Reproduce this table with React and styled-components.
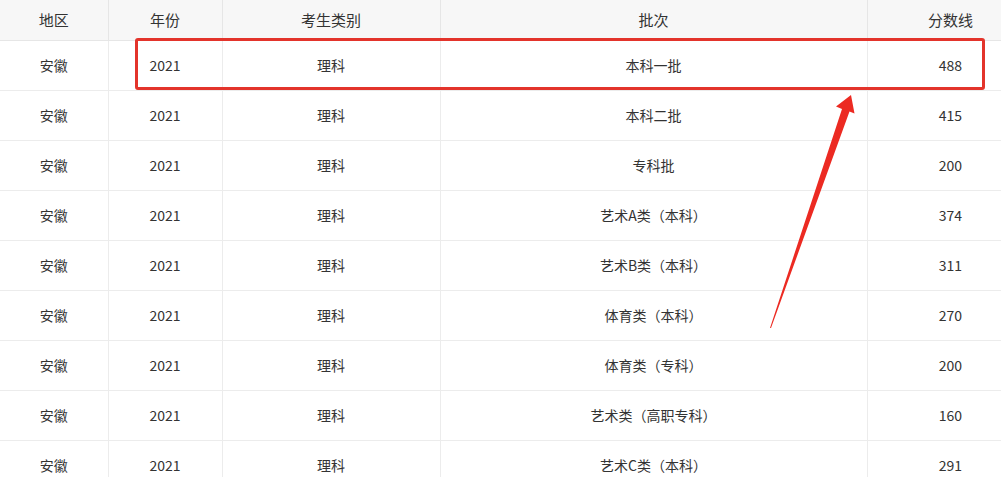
import styled, { createGlobalStyle } from 'styled-components';

const GlobalStyle = createGlobalStyle`
  html, body {
    margin: 0;
    padding: 0;
    background: #ffffff;
  }
  body {
    font-family: "Noto Sans CJK SC", "Noto Sans", sans-serif;
    color: #333333;
  }
`;

const Page = styled.div`
  position: relative;
  width: 1001px;
  height: 477px;
  overflow: hidden;
`;

const Table = styled.table`
  width: 1001px;
  table-layout: fixed;
  border-collapse: collapse;
`;

const HeadCell = styled.th`
  height: 40px;
  box-sizing: border-box;
  padding: 0 ${({ align }) => (align === 'right' ? '28px' : '0')} 1px 0;
  background: #f7f7f7;
  font-size: 15px;
  font-weight: 400;
  color: #333333;
  text-align: ${({ align }) => align || 'center'};
  border-bottom: 1px solid #e6e6e6;
  border-left: ${({ first }) => (first ? 'none' : '1px solid #e6e6e6')};
`;

const Cell = styled.td`
  height: 50px;
  box-sizing: border-box;
  padding: 0 ${({ align }) => (align === 'right' ? '39px' : '0')} 1px 0;
  font-size: 14px;
  color: #333333;
  text-align: ${({ align }) => align || 'center'};
  border-bottom: 1px solid #ececec;
  border-left: ${({ first }) => (first ? 'none' : '1px solid #ececec')};
`;

const Highlight = styled.div`
  position: absolute;
  left: 135px;
  top: 38px;
  width: 850px;
  height: 52px;
  box-sizing: border-box;
  border: 3px solid #e3342b;
  border-radius: 3px;
  pointer-events: none;
`;

const ArrowLayer = styled.svg`
  position: absolute;
  left: 0;
  top: 0;
  pointer-events: none;
`;

const columns = [
  { key: 'area', title: '地区', width: 108 },
  { key: 'year', title: '年份', width: 114 },
  { key: 'kind', title: '考生类别', width: 218 },
  { key: 'batch', title: '批次', width: 427 },
  { key: 'score', title: '分数线', width: 134, align: 'right' },
];

const batches = [
  ['本科一批', 488],
  ['本科二批', 415],
  ['专科批', 200],
  ['艺术A类（本科）', 374],
  ['艺术B类（本科）', 311],
  ['体育类（本科）', 270],
  ['体育类（专科）', 200],
  ['艺术类（高职专科）', 160],
  ['艺术C类（本科）', 291],
];

const rows = batches.map(([batch, score]) => ({
  area: '安徽',
  year: '2021',
  kind: '理科',
  batch,
  score,
}));

const App = () => (
  <Page>
    <GlobalStyle />
    <Table>
      <colgroup>
        {columns.map((c) => (
          <col key={c.key} style={{ width: c.width }} />
        ))}
      </colgroup>
      <thead>
        <tr>
          {columns.map((c, i) => (
            <HeadCell key={c.key} align={c.align} first={i === 0}>
              {c.title}
            </HeadCell>
          ))}
        </tr>
      </thead>
      <tbody>
        {rows.map((row, r) => (
          <tr key={r}>
            {columns.map((c, i) => (
              <Cell key={c.key} align={c.align} first={i === 0}>
                {row[c.key]}
              </Cell>
            ))}
          </tr>
        ))}
      </tbody>
    </Table>
    <Highlight />
    <ArrowLayer width="1001" height="477" viewBox="0 0 1001 477">
      <polygon
        points="770,328 842,109 836,106.5 851,95 854.5,113.5 849.5,111.5 771,328"
        fill="#ec2a22"
      />
    </ArrowLayer>
  </Page>
);

export default App;
